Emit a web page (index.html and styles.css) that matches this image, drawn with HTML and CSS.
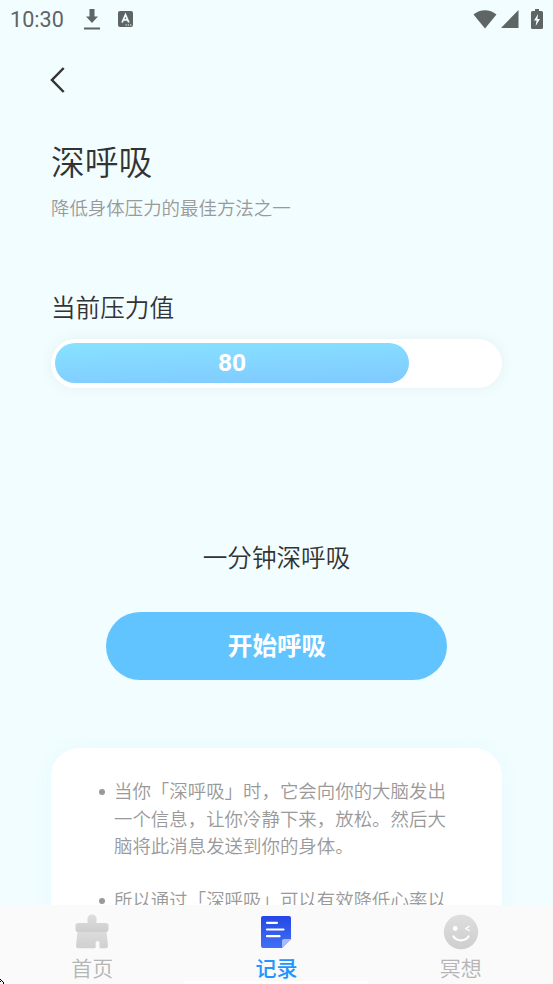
FILE: index.html
```html
<!DOCTYPE html>
<html lang="zh-CN">
<head>
<meta charset="utf-8">
<title>深呼吸</title>
<link rel="stylesheet" href="styles.css">
</head>
<body>
<div class="app">
  <header class="status">
    <span class="time">10:30</span>
    <svg class="download" width="16" height="21" viewBox="0 0 16 21"><path d="M5.500 0h5v7.500h3.500l-6 6.500-6-6.500h3.500zM0 18.500h16v2H0z"/></svg>
    <svg class="keyboard" width="15" height="16" viewBox="0 0 15 16"><rect width="15" height="16" rx="2"/><path class="letter" d="M4.100 11.500 7.500 3.700l3.300 7.800M5.300 8.900h4.400"/><path class="dots" d="M7.500 14h1.300m1 0h1.300m1 0h1.300"/></svg>
    <span class="spacer"></span>
    <svg class="wifi" width="24" height="19" viewBox="0 0 24 19"><path d="M.5 4.500C7-1.200 17-1.200 23.500 4.500L12 18.500z"/></svg>
    <svg class="signal" width="18" height="18" viewBox="0 0 18 18"><path d="M17.500 0v18H0z"/></svg>
    <svg class="battery" width="12" height="20" viewBox="0 0 12 20"><path d="M4 0h4v2h2.500Q12 2 12 3.500v15q0 1.500-1.500 1.500h-9Q0 20 0 18.500v-15Q0 2 1.500 2H4z"/><path class="bolt" d="M7 5 3 11.500h2.500L4.700 17 9 10H6.500z"/></svg>
  </header>
  <main class="content">
    <a class="back"><svg width="15" height="26" viewBox="0 0 15 26"><path d="M13.700 1 2 13l11.700 12"/></svg></a>
    <h1>深呼吸</h1>
    <p class="subtitle">降低身体压力的最佳方法之一</p>
    <h2>当前压力值</h2>
    <div class="meter"><div class="fill">80</div></div>
    <p class="exercise">一分钟深呼吸</p>
    <button class="start">开始呼吸</button>
    <section class="card">
      <ul>
        <li>当你「深呼吸」时，它会向你的大脑发出<br>一个信息，让你冷静下来，放松。然后大<br>脑将此消息发送到你的身体。</li>
        <li>所以通过「深呼吸」可以有效降低心率以</li>
      </ul>
    </section>
  </main>
  <nav class="tabs">
    <a class="tab">
      <svg width="36" height="36" viewBox="0 0 36 36"><defs><linearGradient id="gray" x1="0" y1="0" x2="0" y2="1"><stop offset="0" stop-color="#dedede"/><stop offset="1" stop-color="#cecece"/></linearGradient><linearGradient id="base" x1="0" y1="0" x2="0" y2="1"><stop offset="0" stop-color="#dcdcdc"/><stop offset="1" stop-color="#d0d0d0"/></linearGradient></defs><path fill="url(#base)" d="M3.500 17h29L34 32q0 2.300-2.300 2.300H27q-1.500 0-1.500-1.500v-4q0-1.800-1.900-1.800t-1.900 1.800v4q0 1.500-1.500 1.500H4.300Q2 34.300 2 32z"/><path fill="url(#gray)" d="M13.500 9V5q0-4.500 4.500-4.500T22.500 5v4H31.500q3 0 3 2.500v4q0 2.500-3 2.500H4.500q-3 0-3-2.500v-4Q1.500 9 4.500 9z"/></svg>
      <span>首页</span>
    </a>
    <a class="tab active">
      <svg width="36" height="36" viewBox="0 0 36 36"><defs><linearGradient id="blue" x1="0" y1="0" x2="0" y2="1"><stop offset="0" stop-color="#2448e5"/><stop offset="1" stop-color="#416ff5"/></linearGradient></defs><path fill="url(#blue)" d="M5 2h26q2 0 2 2v21l-9 9H5q-2 0-2-2V4q0-2 2-2z"/><path fill="#a5bcfb" d="M24 34v-7q0-2 2-2h7z"/><path class="lines" d="M9 8.800h10M9 15.500h16.500M9 22.200h12.500"/></svg>
      <span>记录</span>
    </a>
    <a class="tab">
      <svg width="36" height="36" viewBox="0 0 36 36"><circle cx="18" cy="18" r="17.200" fill="url(#gray)"/><circle cx="12.200" cy="14.500" r="2.400" fill="#fff"/><path class="smile" d="M10.500 22.500c3.500 5.200 11.500 5.200 15 0"/><path class="wink" d="m26 12.500-3 2 3 2"/></svg>
      <span>冥想</span>
    </a>
    <span class="home-bar"></span>
    <svg class="corner" width="5" height="5" viewBox="0 0 5 5"><path d="M0 0h1v1H0zM1 1h1v1H1zM0 2h1v1H0zM2 2h1v1H2zM3 3h1v2H3z"/></svg>
  </nav>
</div>
</body>
</html>
```
FILE: styles.css
```css
* { box-sizing: border-box; }
body {
  margin: 0;
  font-family: Roboto, "Noto Sans CJK SC", sans-serif;
  background: #f1fdff;
}
svg { display: block; flex: none; }
h1, h2, p, ul { margin: 0; padding: 0; font-weight: 350; }
.app {
  height: 984px;
  display: flex;
  flex-direction: column;
  overflow: hidden;
  background: #f1fdff;
}
.status {
  height: 38px;
  flex: none;
  display: flex;
  align-items: center;
  padding: 0 10px;
  color: #5f6464;
  fill: #5f6464;
}
.time { width: 74px; padding-top: 1px; font-size: 21.600px; line-height: 38px; }
.keyboard { margin-left: 18px; }
.keyboard .letter { fill: none; stroke: #f1fdff; stroke-width: 1.8; }
.keyboard .dots { stroke: #f1fdff; stroke-width: 1.2; }
.spacer { flex: 1; }
.signal { margin: 0 12px 0 4px; }
.battery .bolt { fill: #f1fdff; }
.content {
  flex: 1;
  min-height: 0;
  overflow: hidden;
  padding: 29px 51px 0;
  display: flex;
  flex-direction: column;
}
.content > * { flex: none; }
.back { height: 26px; margin-left: -1px; }
.back path { fill: none; stroke: #333; stroke-width: 2.5; }
h1 { margin-top: 46px; font-size: 33.800px; line-height: 50px; color: #333; }
.subtitle { margin-top: 6px; font-size: 18.460px; line-height: 28px; color: #999; }
h2 { margin-top: 68px; font-size: 24.600px; line-height: 36px; color: #333; }
.meter {
  margin-top: 12px;
  height: 49px;
  padding: 4px;
  border-radius: 25px;
  background: #fff;
  box-shadow: 0 0 15px rgba(0, 0, 0, .055);
}
.fill {
  width: 354px;
  height: 40px;
  border-radius: 20px;
  background: linear-gradient(178deg, #88e2ff, #7fc9ff);
  color: #fff;
  font-size: 24.600px;
  font-weight: 700;
  line-height: 40px;
  text-align: center;
}
.exercise { margin-top: 153px; font-size: 24.600px; line-height: 36px; text-align: center; color: #333; }
.start {
  margin: 35px 55px 0;
  height: 68px;
  padding: 2px 0 0 1px;
  border: 0;
  border-radius: 34px;
  background: #61c4ff;
  color: #fff;
  font: 700 24.600px/66px Roboto, "Noto Sans CJK SC", sans-serif;
}
.card {
  margin-top: 68px;
  height: 260px;
  padding: 31px 0 0 63px;
  border-radius: 28px;
  background: #fff;
  box-shadow: 0 0 15px rgba(150, 225, 255, .1);
}
ul { list-style: none; font-size: 18.460px; line-height: 27.690px; color: #999; white-space: nowrap; }
li { position: relative; margin-bottom: 26px; }
li::before {
  content: "";
  position: absolute;
  left: -15.500px;
  top: 10px;
  width: 6px;
  height: 6px;
  border-radius: 50%;
  background: #999;
}
.tabs {
  position: relative;
  flex: none;
  height: 79px;
  display: grid;
  grid-template-columns: repeat(3, 1fr);
  background: #fafafa;
}
.tab {
  display: flex;
  flex-direction: column;
  align-items: center;
  padding-top: 9px;
  color: #b5b5b5;
  font-size: 21px;
  font-weight: 350;
  line-height: 30px;
}
.tab span { margin-top: 4px; }
.active { color: #2196ff; font-weight: 500; }
.lines, .smile, .wink { fill: none; stroke: #fff; stroke-width: 2.2; stroke-linecap: round; }
.wink { stroke-width: 1.500; }
.home-bar {
  position: absolute;
  left: 184px;
  bottom: 0;
  width: 185px;
  height: 3px;
  border-radius: 3px 3px 0 0;
  background: #fff;
}
.corner { position: absolute; left: 0; bottom: 0; }
```
